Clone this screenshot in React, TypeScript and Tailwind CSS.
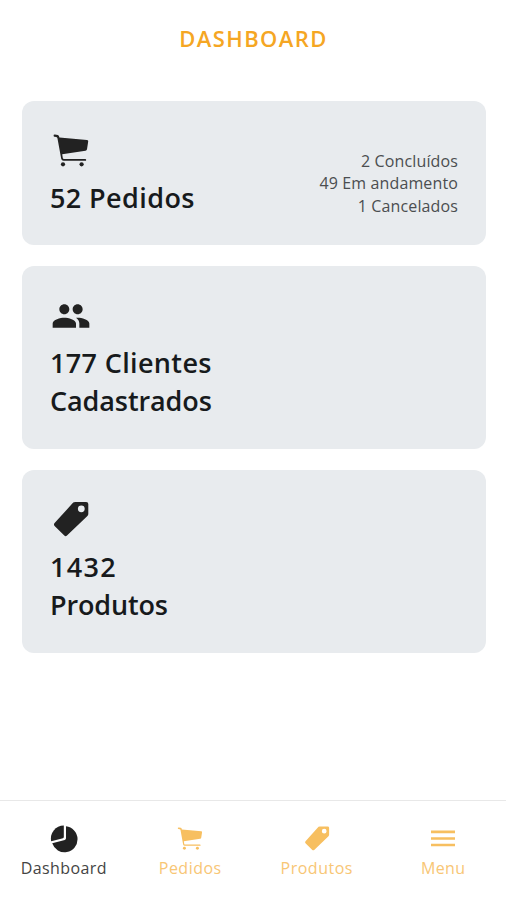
import type { ReactNode } from 'react'
import { MdPeople } from 'react-icons/md'

interface IconProps {
  className?: string
}

function CartIcon({ className }: IconProps) {
  return (
    <svg className={className} viewBox="0 0 40 40" fill="currentColor">
      <path d="M2.6 4.8Q2.4 3.5 3.9 3.6L6.8 4.1Q7.8 4.3 8.1 5.5L8.4 6.6L36 9Q37.5 9.2 37.2 10.6L36 18.3Q35.7 19.6 34.5 19.8L11.2 23.2L11.8 27Q12 28 13 28H34.2Q35.2 28.1 35.2 28.9T34.2 29.8H12.6Q10.6 29.8 10.2 27.8L6.5 7.4Q6.3 6.2 5.2 6L3.4 5.8Q2.7 5.6 2.6 4.8Z" />
      <circle cx="12" cy="33.3" r="2.1" />
      <circle cx="30.6" cy="33.3" r="2.1" />
    </svg>
  )
}

function TagIcon({ className }: IconProps) {
  return (
    <svg className={className} viewBox="0 0 40 40" fill="currentColor">
      <path
        fillRule="evenodd"
        d="M22.2 2.6Q23 2 24.2 2H35.2Q37.3 2 37.3 4V14Q37.3 15 36.4 15.9L16 35.6Q14.6 36.8 13.3 35.6L3.6 25.9Q2.3 24.6 3.6 23.1ZM30.3 5.4A3.4 3.4 0 1 0 30.3 12.2A3.4 3.4 0 1 0 30.3 5.4Z"
      />
    </svg>
  )
}

function PieIcon({ className }: IconProps) {
  return (
    <svg className={className} viewBox="0 0 28 28" fill="currentColor">
      <path d="M16 1.3A13 13 0 1 1 2.2 18.3L14.8 14.9Q16 14.5 16 13.2Z" />
      <path d="M13.8.6V12Q13.8 12.9 12.9 13.2L1.2 16.3A12.9 12.9 0 0 1 13.8.6Z" />
    </svg>
  )
}

function MenuIcon({ className }: IconProps) {
  return (
    <svg className={className} viewBox="0 0 28 28" fill="currentColor">
      <path d="M2 5.6h24v2.6H2zM2 12.2h24v2.6H2zM2 18.7h24v2.6H2z" />
    </svg>
  )
}

interface CardProps {
  icon: ReactNode
  children: ReactNode
  className: string
}

function Card({ icon, children, className }: CardProps) {
  return (
    <section className={`flex flex-col rounded-xl bg-[#e8ebee] px-7 text-[#171a1c] ${className}`}>
      {icon}
      {children}
    </section>
  )
}

const tabs = [
  { label: 'Dashboard', icon: PieIcon, color: 'text-[#222222]', text: 'text-[#444444] tracking-[0.4px]' },
  { label: 'Pedidos', icon: CartIcon, color: 'text-[#f7bf60]', text: 'text-[#f8c675] tracking-[0.5px]' },
  { label: 'Produtos', icon: TagIcon, color: 'text-[#f7bf60]', text: 'text-[#f8c675] tracking-[0.5px]' },
  { label: 'Menu', icon: MenuIcon, color: 'text-[#f7bf60]', text: 'text-[#f8c675] tracking-[0.4px]' },
]

const orders = ['2 Concluídos', '49 Em andamento', '1 Cancelados']

export default function App() {
  return (
    <div className="flex h-[900px] w-[506px] flex-col bg-white font-['Open_Sans','Noto_Sans',sans-serif]">
      <header className="flex h-[100.5px] items-start justify-center pt-[22px]">
        <h1 className="pl-px text-[22px] leading-8 font-semibold tracking-[1.4px] text-[#f5a623]">
          DASHBOARD
        </h1>
      </header>

      <main className="flex flex-1 flex-col gap-[21.5px] pr-5 pl-[22px]">
        <Card icon={<CartIcon className="ml-px h-10 w-10 text-[#222222]" />} className="h-[144px] pt-[30px]">
          <div className="flex items-start justify-between">
            <h2 className="pt-2 text-[27px] leading-[38px] font-semibold tracking-[0.4px]">52 Pedidos</h2>
            <ul className="-mt-[21px] text-right text-[16px] leading-[22.5px] tracking-[0.13px] text-[#4b4e50]">
              {orders.map(order => (
                <li key={order}>{order}</li>
              ))}
            </ul>
          </div>
        </Card>

        <Card icon={<MdPeople className="ml-px h-10 w-10 text-[#222222]" />} className="h-[182.5px] pt-[30px]">
          <h2 className="pt-2 text-[27px] leading-[38px] font-semibold">
            <span className="tracking-[0.35px]">177 Clientes</span>
            <br />
            <span className="tracking-[-0.1px]">Cadastrados</span>
          </h2>
        </Card>

        <Card icon={<TagIcon className="ml-px h-10 w-10 text-[#222222]" />} className="h-[183px] pt-[30px]">
          <h2 className="pt-2 text-[27px] leading-[38px] font-semibold">
            <span className="tracking-[1.3px]">1432</span>
            <br />
            <span className="tracking-[-0.15px]">Produtos</span>
          </h2>
        </Card>
      </main>

      <nav className="grid h-[100px] grid-cols-4 border-t border-[#e8e8e8]">
        {tabs.map(({ label, icon: Icon, color, text }) => (
          <button key={label} className="flex flex-col items-center pt-6 pl-px">
            <Icon className={`h-7 w-7 ${color}`} />
            <span className={`mt-1 text-[16px] leading-[22px] ${text}`}>{label}</span>
          </button>
        ))}
      </nav>
    </div>
  )
}
